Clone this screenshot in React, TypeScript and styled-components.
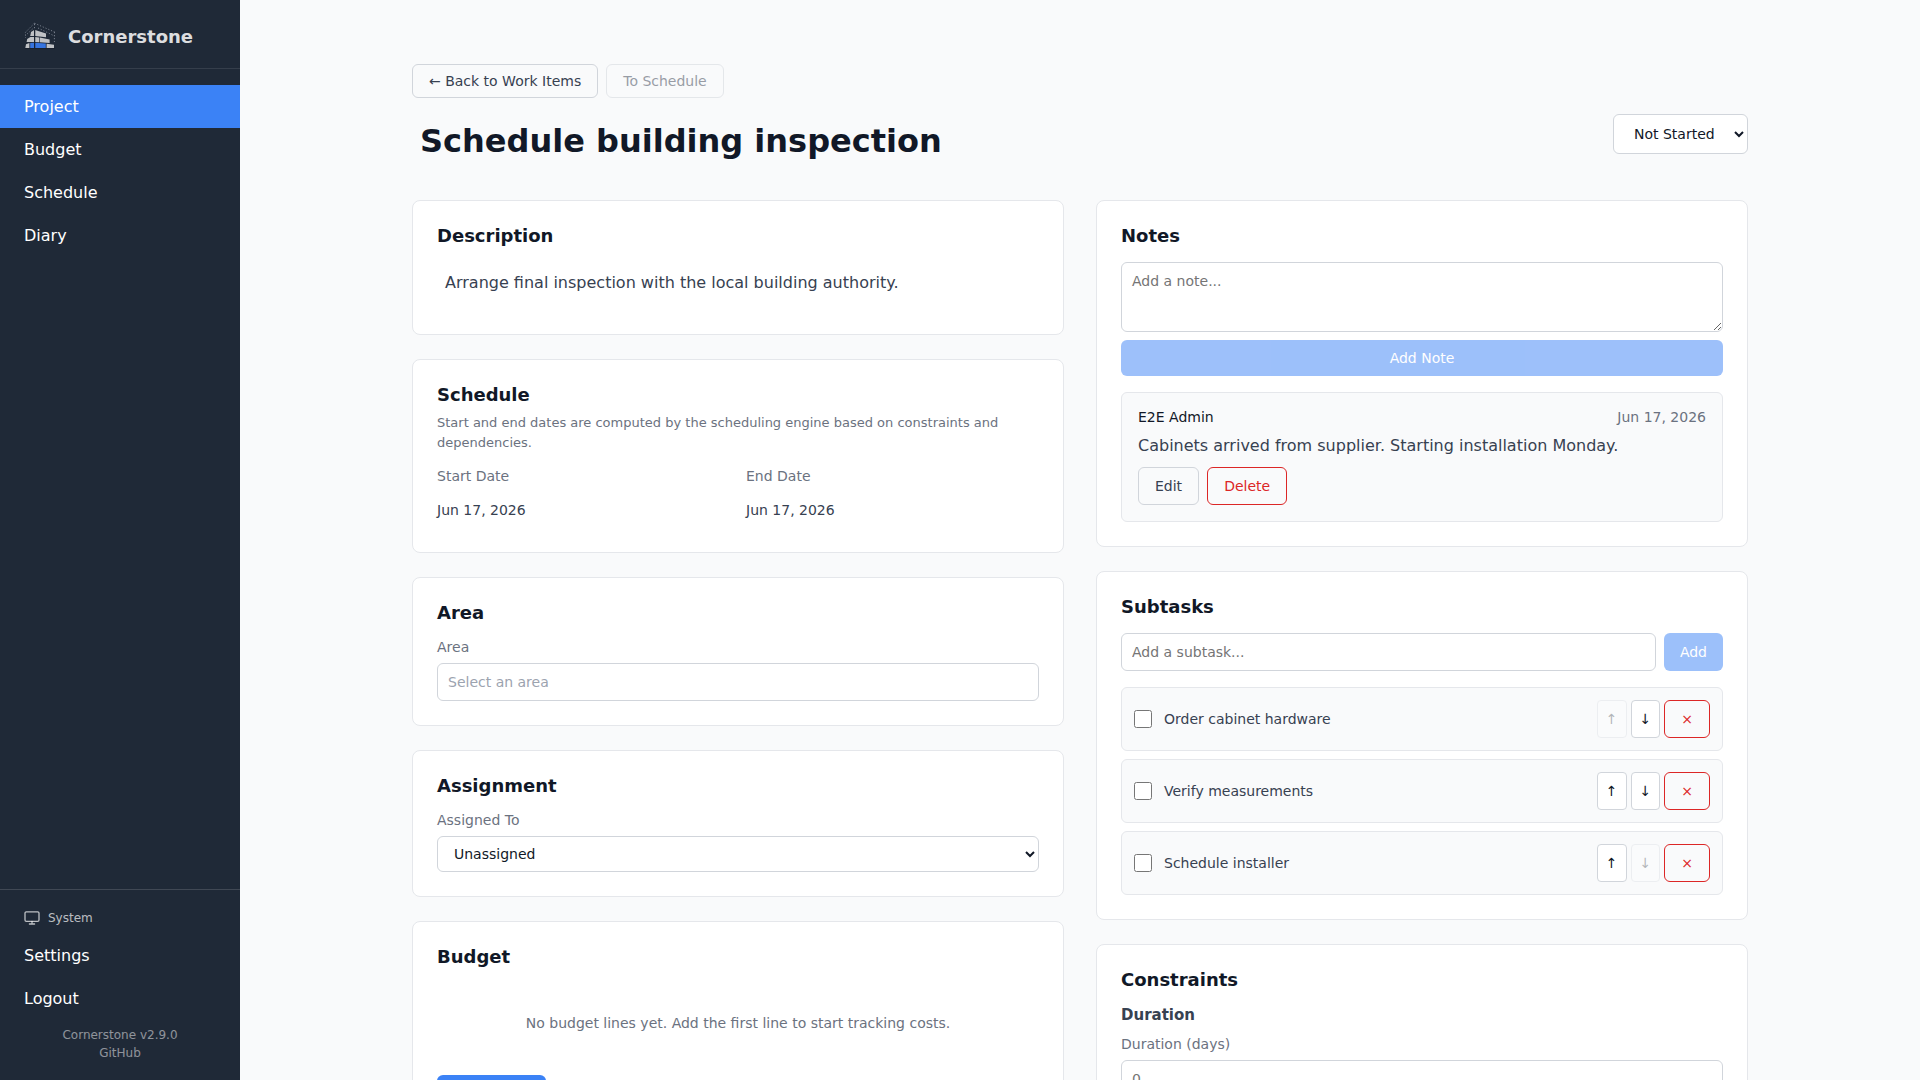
import React, { useState } from 'react';
import styled, { createGlobalStyle, css } from 'styled-components';

const color = {
  page: '#f9fafb',
  surface: '#ffffff',
  sidebar: '#1f2937',
  primary: '#3b82f6',
  danger: '#dc2626',
  heading: '#111827',
  body: '#374151',
  muted: '#6b7280',
  faint: '#9ca3af',
  border: '#e5e7eb',
  borderStrong: '#d1d5db',
};

const GlobalStyle = createGlobalStyle`
  *, *::before, *::after { box-sizing: border-box; }
  body {
    margin: 0;
    background: ${color.page};
    color: ${color.heading};
    font-family: 'DejaVu Sans', Verdana, sans-serif;
    font-size: 16px;
  }
  h1, h2, h3, p, ul, dl, dd { margin: 0; padding: 0; }
  ul { list-style: none; }
  button, input, textarea, select { font-family: inherit; margin: 0; }
`;

const Shell = styled.div`
  display: flex;
  height: 100vh;
  overflow: hidden;
`;

const Sidebar = styled.aside`
  display: flex;
  flex-direction: column;
  flex: 0 0 240px;
  background: ${color.sidebar};
  color: #ffffff;
`;

const Brand = styled.div`
  display: flex;
  align-items: center;
  gap: 12px;
  padding: 20px 24px 16px;
  border-bottom: 1px solid rgba(255, 255, 255, 0.1);
  color: rgba(255, 255, 255, 0.85);
  font-size: 18px;
  font-weight: 600;
`;

const MainNav = styled.nav`
  display: flex;
  flex: 1;
  flex-direction: column;
  padding: 16px 0;
`;

const navItem = css<{ $active?: boolean }>`
  display: block;
  width: 100%;
  padding: 12px 24px;
  border: 0;
  background: ${(p) => (p.$active ? color.primary : 'transparent')};
  color: #ffffff;
  font-size: 16px;
  line-height: 19px;
  text-align: left;
  text-decoration: none;
  cursor: pointer;
`;

const NavLink = styled.a<{ $active?: boolean }>`
  ${navItem}
`;

const NavButton = styled.button<{ $active?: boolean }>`
  ${navItem}
`;

const SidebarFooter = styled.div`
  padding: 8px 0 16px;
  border-top: 1px solid rgba(255, 255, 255, 0.15);
`;

const ThemeButton = styled.button`
  display: flex;
  align-items: center;
  gap: 8px;
  width: 100%;
  padding: 12px 24px 8px;
  border: 0;
  background: transparent;
  color: rgba(255, 255, 255, 0.7);
  font-size: 12px;
  line-height: 16px;
`;

const ProjectInfo = styled.div`
  display: flex;
  flex-direction: column;
  align-items: center;
  gap: 4px;
  padding: 8px 24px 4px;
  color: rgba(255, 255, 255, 0.5);
  font-size: 12px;
  line-height: 14px;

  a {
    color: inherit;
    text-decoration: none;
  }
`;

const Main = styled.main`
  flex: 1;
  min-width: 0;
  overflow-y: auto;
  scrollbar-width: none;
  padding: 32px 0;
`;

const Container = styled.div`
  max-width: 1400px;
  margin: 0 auto;
  padding: 32px;
`;

const ButtonRow = styled.div<{ $gap?: number }>`
  display: flex;
  gap: ${(p) => p.$gap ?? 8}px;
`;

const Button = styled.button<{ $tone?: 'outline' | 'danger' | 'primary'; $compact?: boolean }>`
  padding: ${(p) => (p.$compact ? 8 : 10)}px 16px;
  border: 1px solid ${(p) => (p.$tone === 'danger' ? color.danger : color.borderStrong)};
  border-radius: 6px;
  background: transparent;
  color: ${(p) => (p.$tone === 'danger' ? color.danger : color.body)};
  font-size: 14px;
  line-height: 16px;
  white-space: nowrap;
  cursor: pointer;

  ${(p) =>
    p.$tone === 'primary' &&
    css`
      border: 0;
      background: ${color.primary};
      color: #ffffff;
    `}

  &:disabled {
    opacity: 0.5;
    cursor: not-allowed;
  }
`;

const MoveButton = styled.button`
  padding: 8px;
  border: 1px solid ${color.borderStrong};
  border-radius: 4px;
  background: ${color.surface};
  color: ${color.heading};
  font-size: 14px;
  line-height: 16px;
  cursor: pointer;

  &:disabled {
    opacity: 0.3;
    cursor: not-allowed;
  }
`;

const TitleBar = styled.header`
  display: flex;
  align-items: flex-start;
  justify-content: space-between;
  margin: 16px 0 32px;
`;

const Title = styled.h1`
  padding: 8px;
  font-size: 32px;
  font-weight: 700;
  line-height: 38px;
`;

const Columns = styled.div`
  display: grid;
  grid-template-columns: repeat(2, minmax(0, 1fr));
  align-items: start;
  gap: 32px;
`;

const Column = styled.div`
  display: flex;
  flex-direction: column;
  gap: 24px;
`;

const Card = styled.section`
  padding: 24px;
  border: 1px solid ${color.border};
  border-radius: 8px;
  background: ${color.surface};
`;

const CardTitle = styled.h2<{ $tight?: boolean }>`
  margin-bottom: ${(p) => (p.$tight ? 8 : 16)}px;
  font-size: 18px;
  font-weight: 600;
  line-height: 21px;
`;

const SubTitle = styled.h3`
  margin-bottom: 12px;
  color: ${color.body};
  font-size: 15px;
  font-weight: 600;
  line-height: 18px;
`;

const Description = styled.p`
  min-height: 48px;
  padding: 8px;
  color: ${color.body};
  line-height: 26px;
`;

const Hint = styled.p`
  margin-bottom: 16px;
  color: ${color.muted};
  font-size: 13px;
  line-height: 1.5;
`;

const DateGrid = styled.dl`
  display: grid;
  grid-template-columns: 1fr 1fr;
  gap: 16px;
  font-size: 14px;
  line-height: 16px;

  dt {
    margin-bottom: 8px;
    color: ${color.muted};
  }

  dd {
    padding: 10px 0;
    color: ${color.body};
  }
`;

const Label = styled.label`
  display: block;
  margin-bottom: 8px;
  color: ${color.muted};
  font-size: 14px;
  line-height: 16px;
`;

const field = css`
  display: block;
  width: 100%;
  padding: 10px;
  border: 1px solid ${color.borderStrong};
  border-radius: 6px;
  background: ${color.surface};
  color: ${color.heading};
  font-size: 14px;
  line-height: 16px;
`;

const Input = styled.input<{ $soft?: boolean }>`
  ${field}
  height: 38px;

  &::placeholder {
    color: ${(p) => (p.$soft ? color.faint : '#757575')};
  }
`;

const NoteInput = styled.textarea`
  ${field}
  margin-bottom: 8px;
  resize: vertical;
`;

const Select = styled.select`
  ${field}
  height: 36px;
  padding: 8px 12px;
`;

const StatusSelect = styled.select`
  height: 40px;
  padding: 8px 16px;
  border: 1px solid ${color.borderStrong};
  border-radius: 6px;
  background: ${color.surface};
  color: ${color.heading};
  font-size: 14px;
`;

const EmptyText = styled.p`
  margin-bottom: 12px;
  padding: 32px;
  color: ${color.muted};
  font-size: 14px;
  line-height: 16px;
  text-align: center;
`;

const NoteForm = styled.form`
  display: flex;
  flex-direction: column;
  margin-bottom: 16px;
`;

const Note = styled.article`
  padding: 16px;
  border: 1px solid ${color.border};
  border-radius: 6px;
  background: ${color.page};
`;

const NoteMeta = styled.div`
  display: flex;
  justify-content: space-between;
  margin-bottom: 8px;
  font-size: 14px;
  line-height: 16px;

  time {
    color: ${color.muted};
  }
`;

const NoteText = styled.p`
  margin-bottom: 8px;
  color: ${color.body};
  line-height: 26px;
`;

const SubtaskForm = styled.form`
  display: flex;
  gap: 8px;
  margin-bottom: 16px;
`;

const SubtaskList = styled.ul`
  display: flex;
  flex-direction: column;
  gap: 8px;
`;

const SubtaskItem = styled.li`
  display: flex;
  align-items: center;
  gap: 12px;
  padding: 12px;
  border: 1px solid ${color.border};
  border-radius: 6px;
  background: ${color.page};
`;

const SubtaskLabel = styled.label`
  display: flex;
  flex: 1;
  align-items: center;
  gap: 12px;
  color: ${color.body};
  font-size: 14px;
  line-height: 16px;
`;

const Checkbox = styled.input`
  width: 18px;
  height: 18px;
`;

function Logo() {
  return (
    <svg width="32" height="32" viewBox="0 0 32 32" fill="none" aria-hidden="true">
      <g stroke="#8a929e" strokeWidth="0.8" strokeDasharray="1.2 1.8">
        <path d="M10.5 3.2 1.5 12.2V18" />
        <path d="M10.5 3.2 31 12.2" />
        <path d="M10.5 4v6" />
        <path d="M8.5 9 2 15" />
        <path d="M14 8 30.5 16" />
        <path d="M30.4 12v10" />
      </g>
      <path d="M1 28.5h30" stroke="#151c28" strokeWidth="0.6" />
      <g fill="#c0c2c5">
        <path d="M7 12 10.2 10v6H6.2z" />
        <path d="M11.1 10 22 13.6V17.2l-10.9-1.1z" />
        <path d="M3.2 19 6.4 17h3.8v5H2.6z" />
        <path d="M11.1 16.9 15.2 17.4v4.9l-4.1-.3z" />
        <path d="M15.8 17.5 25.6 19.6v3.4l-9.8-.7z" />
        <path d="M2 24.2 5.4 22.9V28H1.3z" />
        <path d="M22.6 23.8 30 24.8V28h-7.4z" />
      </g>
      <path d="M6.2 22.9 10.3 22.7V28H6.2zM11.1 22.7 21.8 23.6V28H11.1z" fill="#3674df" />
      <path d="M10.7 10v18" stroke="#111827" strokeWidth="0.9" />
    </svg>
  );
}

function MonitorIcon() {
  return (
    <svg
      width="16"
      height="16"
      viewBox="0 0 16 16"
      fill="none"
      stroke="currentColor"
      strokeWidth="1.3"
      strokeLinecap="round"
      strokeLinejoin="round"
      aria-hidden="true"
    >
      <rect x="1" y="1.8" width="14" height="9.6" rx="1.3" />
      <path d="M8 11.4v2.4M5.4 14h5.2" />
    </svg>
  );
}

const navLinks = ['Project', 'Budget', 'Schedule', 'Diary'];
const subtasks = ['Order cabinet hardware', 'Verify measurements', 'Schedule installer'];

function SidebarPanel() {
  return (
    <Sidebar>
      <Brand>
        <Logo />
        Cornerstone
      </Brand>
      <MainNav aria-label="Main">
        {navLinks.map((name) => (
          <NavLink key={name} href="#" $active={name === 'Project'}>
            {name}
          </NavLink>
        ))}
      </MainNav>
      <SidebarFooter>
        <ThemeButton type="button">
          <MonitorIcon />
          System
        </ThemeButton>
        <NavLink href="#">Settings</NavLink>
        <NavButton type="button">Logout</NavButton>
        <ProjectInfo>
          <span>Cornerstone v2.9.0</span>
          <a href="#">GitHub</a>
        </ProjectInfo>
      </SidebarFooter>
    </Sidebar>
  );
}

function NotesCard() {
  const [draft, setDraft] = useState('');
  return (
    <Card>
      <CardTitle>Notes</CardTitle>
      <NoteForm>
        <NoteInput
          rows={3}
          aria-label="Note"
          placeholder="Add a note..."
          value={draft}
          onChange={(e) => setDraft(e.target.value)}
        />
        <Button type="button" $tone="primary" disabled={!draft}>
          Add Note
        </Button>
      </NoteForm>
      <Note>
        <NoteMeta>
          <span>E2E Admin</span>
          <time dateTime="2026-06-17">Jun 17, 2026</time>
        </NoteMeta>
        <NoteText>Cabinets arrived from supplier. Starting installation Monday.</NoteText>
        <ButtonRow>
          <Button type="button">Edit</Button>
          <Button type="button" $tone="danger">
            Delete
          </Button>
        </ButtonRow>
      </Note>
    </Card>
  );
}

function SubtasksCard() {
  const [draft, setDraft] = useState('');
  return (
    <Card>
      <CardTitle>Subtasks</CardTitle>
      <SubtaskForm>
        <Input
          aria-label="Subtask"
          placeholder="Add a subtask..."
          value={draft}
          onChange={(e) => setDraft(e.target.value)}
        />
        <Button type="button" $tone="primary" disabled={!draft}>
          Add
        </Button>
      </SubtaskForm>
      <SubtaskList>
        {subtasks.map((name, i) => (
          <SubtaskItem key={name}>
            <SubtaskLabel>
              <Checkbox type="checkbox" />
              {name}
            </SubtaskLabel>
            <ButtonRow $gap={4}>
              <MoveButton type="button" aria-label="Move up" disabled={i === 0}>
                ↑
              </MoveButton>
              <MoveButton type="button" aria-label="Move down" disabled={i === subtasks.length - 1}>
                ↓
              </MoveButton>
              <Button type="button" $tone="danger" aria-label="Delete subtask">
                ×
              </Button>
            </ButtonRow>
          </SubtaskItem>
        ))}
      </SubtaskList>
    </Card>
  );
}

export default function App() {
  return (
    <>
      <GlobalStyle />
      <Shell>
        <SidebarPanel />
        <Main>
          <Container>
            <ButtonRow>
              <Button type="button" $compact>
                ← Back to Work Items
              </Button>
              <Button type="button" $compact disabled>
                To Schedule
              </Button>
            </ButtonRow>
            <TitleBar>
              <Title>Schedule building inspection</Title>
              <StatusSelect aria-label="Status" defaultValue="Not Started">
                <option>Not Started</option>
                <option>In Progress</option>
                <option>Completed</option>
              </StatusSelect>
            </TitleBar>

            <Columns>
              <Column>
                <Card>
                  <CardTitle>Description</CardTitle>
                  <Description>Arrange final inspection with the local building authority.</Description>
                </Card>

                <Card>
                  <CardTitle $tight>Schedule</CardTitle>
                  <Hint>
                    Start and end dates are computed by the scheduling engine based on constraints and
                    dependencies.
                  </Hint>
                  <DateGrid>
                    <div>
                      <dt>Start Date</dt>
                      <dd>Jun 17, 2026</dd>
                    </div>
                    <div>
                      <dt>End Date</dt>
                      <dd>Jun 17, 2026</dd>
                    </div>
                  </DateGrid>
                </Card>

                <Card>
                  <CardTitle>Area</CardTitle>
                  <Label htmlFor="area">Area</Label>
                  <Input id="area" $soft placeholder="Select an area" />
                </Card>

                <Card>
                  <CardTitle>Assignment</CardTitle>
                  <Label htmlFor="assignee">Assigned To</Label>
                  <Select id="assignee">
                    <option>Unassigned</option>
                  </Select>
                </Card>

                <Card>
                  <CardTitle>Budget</CardTitle>
                  <EmptyText>No budget lines yet. Add the first line to start tracking costs.</EmptyText>
                  <Button type="button" $tone="primary">
                    + Add Line
                  </Button>
                </Card>
              </Column>

              <Column>
                <NotesCard />
                <SubtasksCard />
                <Card>
                  <CardTitle>Constraints</CardTitle>
                  <SubTitle>Duration</SubTitle>
                  <Label htmlFor="duration">Duration (days)</Label>
                  <Input id="duration" type="number" min={0} placeholder="0" />
                </Card>
              </Column>
            </Columns>
          </Container>
        </Main>
      </Shell>
    </>
  );
}
